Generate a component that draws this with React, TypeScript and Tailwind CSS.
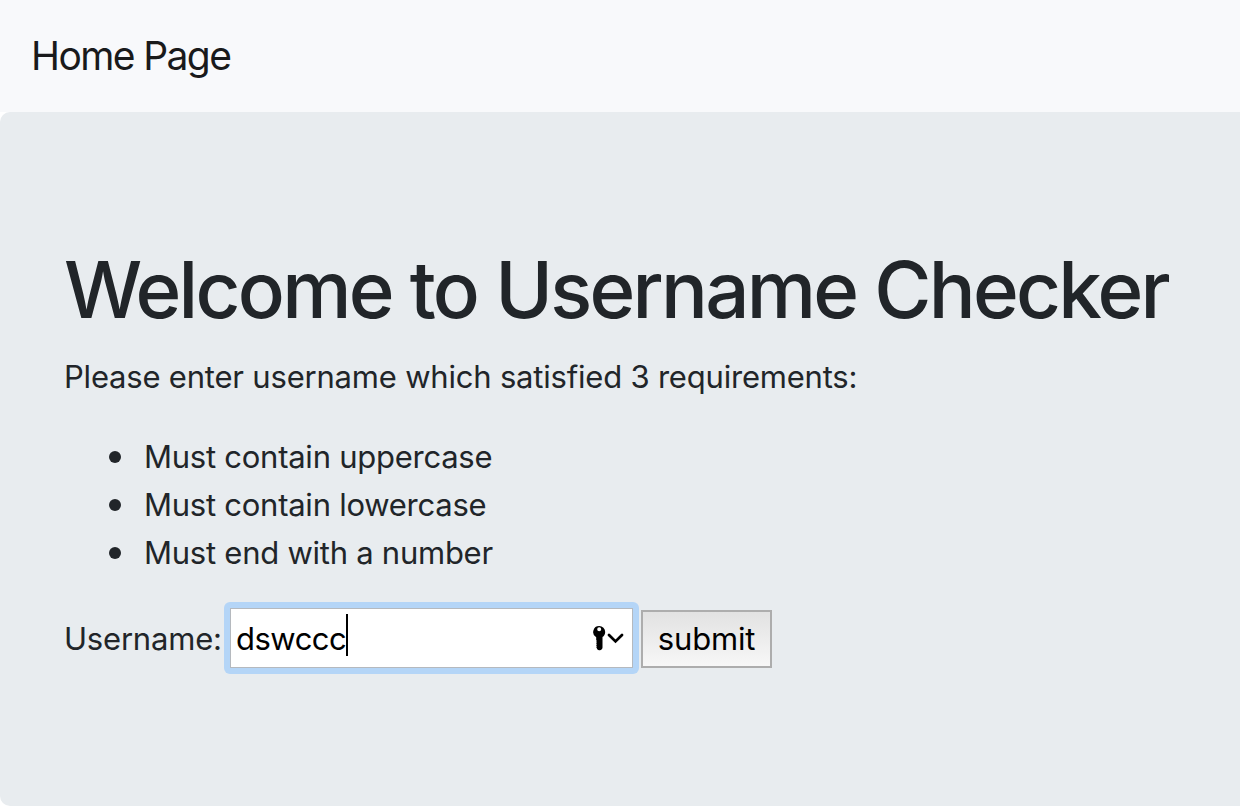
const requirements = ["Must contain uppercase", "Must contain lowercase", "Must end with a number"];

function KeyIcon() {
  return (
    <svg width="13" height="25" viewBox="0 0 13 25" aria-hidden="true">
      <path
        fillRule="evenodd"
        d="M6.2 0a6 6 0 0 1 6 6c0 2.1-1.1 4-2.7 5.1V21.6c0 1.5-1.1 2.6-2.6 2.6h-.8c-1.2 0-2.3-1-2.3-2.2l-.6-.8 .6-.8-.6-.9.6-.9-.6-.9.6-.9-.6-.9.6-.9-.6-.9V11.2A6 6 0 0 1 6.2 0Zm0 1.300a2 2 0 1 0 0 4 2 2 0 0 0 0-4Z"
        fill="black"
      />
    </svg>
  );
}

function ChevronIcon() {
  return (
    <svg width="17" height="11" viewBox="0 0 17 11" fill="none" stroke="black" strokeWidth="2.8" strokeLinecap="round" strokeLinejoin="miter" aria-hidden="true">
      <path d="m2 2 6.500 6.400L15 2" />
    </svg>
  );
}

export default function App() {
  return (
    <div className="flex h-[806px] w-[1240px] flex-col overflow-hidden bg-white font-['Inter',sans-serif] text-[31px] leading-[48px] tracking-[-0.2px] text-[#212529]">
      <nav className="flex h-28 shrink-0 items-center bg-[#f8f9fb] px-[31px]">
        <a className="pb-px text-[39px] leading-[60px] tracking-[-1.6px] whitespace-nowrap text-[#191a1b]">Home Page</a>
      </nav>
      <main className="flex h-[694px] flex-col rounded-l-[10px] bg-[#e8ecef] px-16 pt-32">
        <h1 className="mb-3.5 pt-0.5 text-[78px] leading-[96px] font-medium tracking-[-2.75px] whitespace-nowrap">Welcome to Username Checker</h1>
        <p className="mb-8 pt-px leading-[47px] whitespace-nowrap">Please enter username which satisfied 3 requirements:</p>
        <ul className="mb-8 pl-[45px]">
          {requirements.map((text) => (
            <li key={text} className="flex h-12 items-center gap-[23px] tracking-[-0.25px]">
              <span className="mt-px size-3 shrink-0 rounded-full bg-[#212529]" />
              <span className="pt-0.5 whitespace-nowrap">{text}</span>
            </li>
          ))}
        </ul>
        <form className="flex h-[60px] items-center">
          <label className="w-40 pt-0.5 whitespace-nowrap">Username:</label>
          <div className="-my-1.5 rounded-[6px] bg-[#b4d5f7] p-1.5">
            <div role="textbox" className="flex h-[60px] w-[403px] items-center border border-[#b5b9be] bg-white pr-[8px] pl-[5px] text-black">
              <span className="w-[110px] pt-0.5 tracking-[-0.5px] whitespace-nowrap">dswccc</span>
              <span className="mb-1.5 h-[42px] w-0.5 bg-black" />
              <span className="ml-auto flex items-center gap-px">
                <KeyIcon />
                <ChevronIcon />
              </span>
            </div>
          </div>
          <button type="button" className="mt-0.5 ml-0.5 flex h-[58px] w-[131px] items-center justify-center border-2 border-[#adadad] bg-linear-to-b from-[#e2e2e2] to-[#f7f7f7] text-black">
            submit
          </button>
        </form>
      </main>
    </div>
  );
}
